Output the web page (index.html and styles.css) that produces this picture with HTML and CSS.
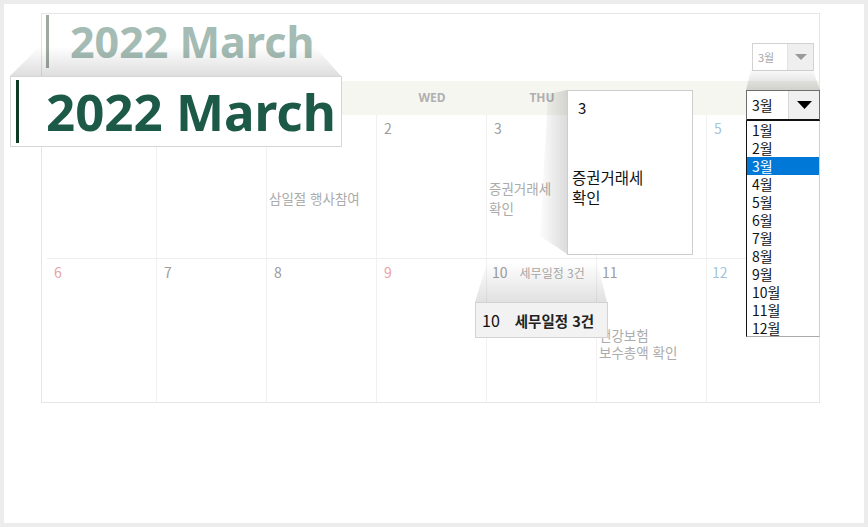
FILE: index.html
```html
<!DOCTYPE html>
<html lang="ko">
<head>
<meta charset="utf-8">
<title>2022 March</title>
<link rel="stylesheet" href="styles.css">
</head>
<body>
<div class="page">
  <div class="calendar">
    <div class="cal-top">
      <h1 class="title">2022 March</h1>
      <div class="month-select">
        <span class="ms-value">3월</span>
        <span class="ms-btn"><svg width="12" height="6" viewBox="0 0 12 6"><path d="M0 0H12L6 6Z" fill="#9a9a9a"/></svg></span>
      </div>
    </div>
    <div class="grid">
      <div class="dow">SUN</div>
      <div class="dow">MON</div>
      <div class="dow">TUE</div>
      <div class="dow">WED</div>
      <div class="dow">THU</div>
      <div class="dow">FRI</div>
      <div class="dow">SAT</div>

      <div class="cell row1"></div>
      <div class="cell row1"></div>
      <div class="cell row1"><div class="num">1</div><div class="event"><p>삼일절 행사참여</p></div></div>
      <div class="cell row1"><div class="num">2</div></div>
      <div class="cell row1"><div class="num">3</div><div class="event"><p>증권거래세<br>확인</p></div></div>
      <div class="cell row1"><div class="num">4</div></div>
      <div class="cell row1 last"><div class="num sat">5</div></div>

      <div class="cell"><div class="num sun">6</div></div>
      <div class="cell"><div class="num">7</div></div>
      <div class="cell"><div class="num">8</div></div>
      <div class="cell"><div class="num sun">9</div></div>
      <div class="cell"><div class="num num-two">10<span class="tag">세무일정 3건</span></div></div>
      <div class="cell"><div class="num num-two">11</div><div class="event event-tight"><p>건강보험<br>보수총액 확인</p></div></div>
      <div class="cell last"><div class="num num-two sat">12</div></div>
    </div>
  </div>

  <svg class="wedges" width="860" height="519" viewBox="4 4 860 519">
    <defs>
      <linearGradient id="g1" gradientUnits="userSpaceOnUse" x1="0" y1="46" x2="0" y2="76">
        <stop offset="0" stop-color="#000" stop-opacity="0"/>
        <stop offset="1" stop-color="#000" stop-opacity="0.13"/>
      </linearGradient>
      <linearGradient id="g2" gradientUnits="userSpaceOnUse" x1="538" y1="0" x2="567" y2="0">
        <stop offset="0" stop-color="#000" stop-opacity="0"/>
        <stop offset="1" stop-color="#000" stop-opacity="0.14"/>
      </linearGradient>
      <linearGradient id="g3" gradientUnits="userSpaceOnUse" x1="0" y1="262" x2="0" y2="302">
        <stop offset="0" stop-color="#000" stop-opacity="0"/>
        <stop offset="1" stop-color="#000" stop-opacity="0.12"/>
      </linearGradient>
      <linearGradient id="g4" gradientUnits="userSpaceOnUse" x1="0" y1="70" x2="0" y2="90">
        <stop offset="0" stop-color="#000" stop-opacity="0.02"/>
        <stop offset="1" stop-color="#000" stop-opacity="0.15"/>
      </linearGradient>
    </defs>
    <polygon points="38,48 316,48 341,76 10,76" fill="url(#g1)"/>
    <polygon points="548,94 567,90 567,254 540,236" fill="url(#g2)"/>
    <polygon points="487,262 597,262 607,302 475,302" fill="url(#g3)"/>
    <polygon points="751,70 813,70 820,90 746,90" fill="url(#g4)"/>
  </svg>

  <div class="zoom-title">
    <span class="zt-bar"></span>
    <span class="zt-text">2022 March</span>
  </div>

  <div class="zoom-cell">
    <div class="zc-num">3</div>
    <div class="zc-event">증권거래세<br>확인</div>
  </div>

  <div class="zoom-tag">
    <span class="zg-num">10</span>
    <span class="zg-text">세무일정 3건</span>
  </div>

  <div class="zoom-select">
    <div class="zs-box">
      <span class="zs-value">3월</span>
      <span class="zs-btn"><svg width="15" height="8" viewBox="0 0 15 8"><path d="M0 0H15L7.5 8Z" fill="#000"/></svg></span>
    </div>
    <ul class="zs-list">
      <li>1월</li>
      <li>2월</li>
      <li class="selected">3월</li>
      <li>4월</li>
      <li>5월</li>
      <li>6월</li>
      <li>7월</li>
      <li>8월</li>
      <li>9월</li>
      <li>10월</li>
      <li>11월</li>
      <li>12월</li>
    </ul>
  </div>
</div>
</body>
</html>
```

FILE: styles.css
```css
html, body {
  margin: 0;
  padding: 0;
  background: #ececec;
}

.page {
  position: relative;
  margin: 4px;
  width: 860px;
  height: 519px;
  box-sizing: border-box;
  padding: 9px 0 0 37px;
  background: #fff;
  overflow: hidden;
  font-family: "Noto Sans CJK KR", "Noto Sans", sans-serif;
}

.calendar {
  width: 779px;
  box-sizing: border-box;
  border: 1px solid #e6e6e6;
  padding-left: 5px;
}

.cal-top {
  height: 67px;
  box-sizing: border-box;
  margin-left: -5px;
  padding: 1px 5px 0 4px;
  display: flex;
  justify-content: space-between;
  align-items: flex-start;
}

.title {
  margin: 0;
  height: 53px;
  display: flex;
  align-items: center;
  border-left: 3px solid #9caaa0;
  padding-left: 21px;
  font-family: "Noto Sans", sans-serif;
  font-weight: 700;
  font-size: 43px;
  line-height: 1;
  color: #a4bcb4;
}

.month-select {
  margin-top: 28px;
  width: 62px;
  height: 28px;
  box-sizing: border-box;
  border: 1px solid #d2d2d2;
  display: flex;
  align-items: stretch;
}

.ms-value {
  flex: 1;
  padding-left: 5px;
  font-size: 11px;
  line-height: 26px;
  color: #a8a8a8;
}

.ms-btn {
  width: 25px;
  background: #efefef;
  border-left: 1px solid #e2e2e2;
  display: flex;
  align-items: center;
  justify-content: center;
}

.grid {
  display: grid;
  grid-template-columns: repeat(6, 110px) 1fr;
  grid-template-rows: 34px 144px 143px;
}

.dow {
  background: #f6f6f1;
  text-align: center;
  font-family: "Noto Sans", sans-serif;
  font-size: 12px;
  font-weight: 700;
  line-height: 34px;
  color: #b0b0b0;
}

.cell {
  border-right: 1px solid #f1f1f1;
  padding: 3px 6px 0 7px;
  display: flex;
  flex-direction: column;
  min-width: 0;
}

.cell.last {
  border-right: none;
}

.cell.row1 {
  border-bottom: 1px solid #ededed;
}

.num {
  font-size: 14px;
  line-height: 20px;
  height: 20px;
  color: #9d9d9d;
  white-space: nowrap;
}

.num-two {
  margin-left: -2px;
}

.num.sun {
  color: #e8a2a2;
}

.num.sat {
  color: #a3c5dc;
}

.tag {
  margin-left: 12px;
  font-size: 12px;
  color: #ababab;
}

.event {
  flex: 1;
  display: flex;
  align-items: center;
  margin-left: -5px;
}

.event p {
  margin: 0;
  font-size: 13.5px;
  line-height: 20px;
  color: #ababab;
  white-space: nowrap;
}

.event-tight {
  padding-top: 4px;
}

.event-tight p {
  line-height: 17px;
}

.wedges {
  position: absolute;
  left: 0;
  top: 0;
  z-index: 1;
  pointer-events: none;
}

.zoom-title {
  position: absolute;
  left: 6px;
  top: 72px;
  z-index: 2;
  width: 332px;
  height: 71px;
  box-sizing: border-box;
  border: 1px solid #d6d6d6;
  background: #fff;
  display: flex;
  align-items: center;
  padding-left: 5px;
}

.zt-bar {
  width: 3px;
  height: 63px;
  background: #0c3a22;
}

.zt-text {
  margin-left: 27px;
  font-family: "Noto Sans", sans-serif;
  font-weight: 700;
  font-size: 51px;
  line-height: 1;
  color: #1c5a47;
}

.zoom-cell {
  position: absolute;
  left: 563px;
  top: 86px;
  z-index: 2;
  width: 126px;
  height: 165px;
  box-sizing: border-box;
  border: 1px solid #cdcdcd;
  background: #fff;
  padding: 7px 4px 0 4px;
}

.zc-num {
  margin-left: 6px;
  font-size: 15px;
  line-height: 20px;
  color: #111;
}

.zc-event {
  margin-top: 49px;
  font-size: 15.5px;
  line-height: 20px;
  color: #111;
}

.zoom-tag {
  position: absolute;
  left: 471px;
  top: 298px;
  z-index: 2;
  width: 133px;
  height: 36px;
  box-sizing: border-box;
  border: 1px solid #d3d3d3;
  background: #f2f2f2;
  display: flex;
  align-items: center;
  padding-left: 6px;
  gap: 15px;
  color: #111;
}

.zg-num {
  font-size: 16px;
}

.zg-text {
  font-size: 14.5px;
  font-weight: 700;
  color: #222;
}

.zoom-select {
  position: absolute;
  left: 742px;
  top: 86px;
  z-index: 2;
  width: 74px;
}

.zs-box {
  height: 31px;
  box-sizing: border-box;
  border: 1px solid #6e6e6e;
  border-bottom: 2px solid #111;
  background: #fff;
  display: flex;
  align-items: stretch;
}

.zs-value {
  flex: 1;
  padding-left: 5px;
  font-size: 14px;
  line-height: 28px;
  color: #111;
}

.zs-btn {
  width: 30px;
  background: #f0f0f0;
  border-left: 1px solid #d8d8d8;
  display: flex;
  align-items: center;
  justify-content: center;
}

.zs-list {
  margin: 0;
  padding: 0;
  list-style: none;
  height: 216px;
  box-sizing: border-box;
  border-left: 1px solid #111;
  border-right: 1px solid #cfcfcf;
  border-bottom: 1px solid #aaa;
  background: #fff;
  overflow: hidden;
}

.zs-list li {
  height: 18px;
  padding-left: 5px;
  font-size: 14px;
  line-height: 18px;
  color: #111;
}

.zs-list li.selected {
  background: #0078d7;
  color: #fff;
}
```
